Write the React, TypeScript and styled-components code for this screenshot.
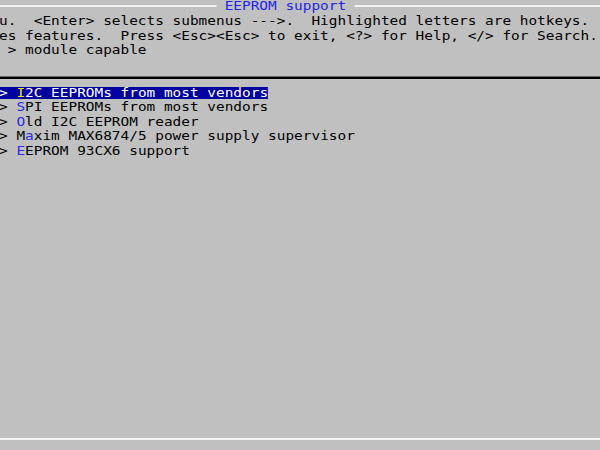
import React from "react";
import styled, { createGlobalStyle } from "styled-components";

const GlobalStyle = createGlobalStyle`
  html, body {
    margin: 0;
    padding: 0;
    background: #c0c0c0;
    overflow: hidden;
  }
  body {
    font-family: "DejaVu Sans Mono", "Liberation Mono", monospace;
  }
`;

const Screen = styled.div`
  width: 494px;
  height: 450px;
  margin-left: -1.5px;
  transform: scaleX(1.222);
  transform-origin: 0 0;
  display: flex;
  flex-direction: column;
  font-size: 11.8px;
  color: #000;
  background: #c0c0c0;
`;

const TitleRow = styled.div`
  display: flex;
  align-items: flex-start;
  height: 14px;
`;

const BorderLine = styled.div<{ $cols?: number }>`
  height: 2px;
  margin-top: 5px;
  background: #f4f4f4;
  ${(p) => (p.$cols ? `width: ${p.$cols}ch;` : "flex: 1;")}
`;

const Title = styled.span`
  color: #2323ea;
  line-height: 13px;
  white-space: pre;
`;

const HelpText = styled.div`
  line-height: 14.5px;
  white-space: pre;
`;

const Separator = styled.div`
  margin-top: 18.5px;
  height: 2px;
  border-top: 1px solid #6c6c6c;
  background: #000;
`;

const Menu = styled.div`
  flex: 1;
  margin-top: 5.5px;
  display: flex;
  flex-direction: column;
`;

const MenuRow = styled.div`
  height: 14.5px;
  padding-top: 2px;
  box-sizing: border-box;
  display: flex;
`;

const Entry = styled.span<{ $selected?: boolean }>`
  display: block;
  height: 12px;
  line-height: 12px;
  white-space: pre;
  background: ${(p) => (p.$selected ? "#0000a0" : "transparent")};
  color: ${(p) => (p.$selected ? "#ffffff" : "#000000")};
`;

const Hot = styled.span<{ $selected?: boolean }>`
  color: ${(p) => (p.$selected ? "#e8e800" : "#2a2af2")};
`;

const BottomLine = styled.div`
  height: 2px;
  margin-bottom: 10px;
  background: #f4f4f4;
`;

const items = [
  { label: "I2C EEPROMs from most vendors", hot: 0 },
  { label: "SPI EEPROMs from most vendors", hot: 0 },
  { label: "Old I2C EEPROM reader", hot: 0 },
  { label: "Maxim MAX6874/5 power supply supervisor", hot: 1 },
  { label: "EEPROM 93CX6 support", hot: 0 },
];

const selectedIndex = 0;

export default function App() {
  return (
    <>
      <GlobalStyle />
      <Screen>
        <TitleRow>
          <BorderLine $cols={25} />
          <Title> EEPROM support </Title>
          <BorderLine />
        </TitleRow>
        <HelpText>u.  &lt;Enter&gt; selects submenus ---&gt;.  Highlighted letters are hotkeys.</HelpText>
        <HelpText>es features.  Press &lt;Esc&gt;&lt;Esc&gt; to exit, &lt;?&gt; for Help, &lt;/&gt; for Search.</HelpText>
        <HelpText> &gt; module capable</HelpText>
        <Separator />
        <Menu>
          {items.map((it, i) => {
            const sel = i === selectedIndex;
            return (
              <MenuRow key={it.label}>
                <Entry $selected={sel}>
                  {"> "}
                  {it.label.slice(0, it.hot)}
                  <Hot $selected={sel}>{it.label[it.hot]}</Hot>
                  {it.label.slice(it.hot + 1)}
                </Entry>
              </MenuRow>
            );
          })}
        </Menu>
        <BottomLine />
      </Screen>
    </>
  );
}
